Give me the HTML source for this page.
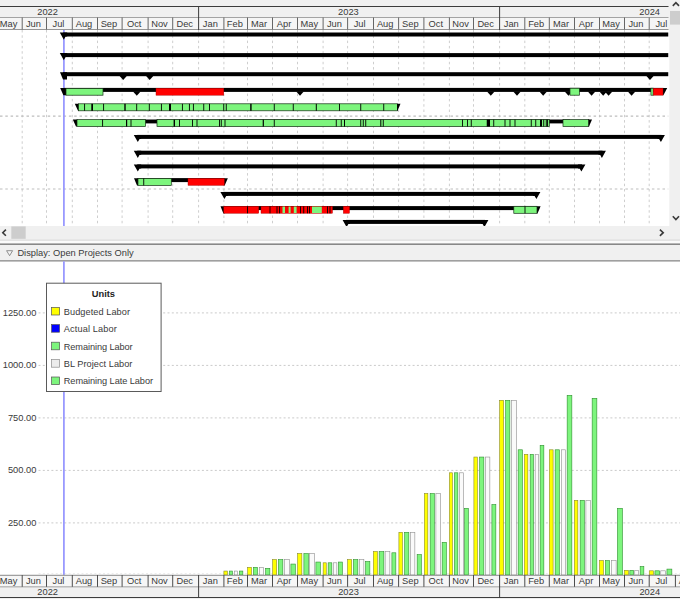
<!DOCTYPE html>
<html lang="en">
<head>
<meta charset="utf-8">
<title>Resource Usage Profile</title>
<style>
html,body{margin:0;padding:0;background:#fff;}
body{width:680px;height:599px;overflow:hidden;font-family:"Liberation Sans",Arial,sans-serif;}
svg{display:block;}
</style>
</head>
<body>
<svg width="680" height="599" viewBox="0 0 680 599" font-family='"Liberation Sans", Arial, sans-serif' font-size="9.3" fill="#3a3a3a">
<rect x="0" y="0" width="680" height="599" fill="#ffffff"/>
<g id="gantt-header">
<rect x="0" y="0" width="680" height="30" fill="#f0f0f0"/>
<rect x="0" y="17.6" width="668.5" height="12" fill="#f5f5f5"/>
<rect x="0" y="6" width="668.5" height="1" fill="#3c3c3c"/>
<rect x="0" y="17" width="668.5" height="0.9" fill="#9a9a9a"/>
<rect x="0" y="29" width="668.5" height="0.9" fill="#8c8c8c"/>
<rect x="21.7" y="17.5" width="1" height="12" fill="#666"/>
<rect x="46" y="17.5" width="1" height="12" fill="#666"/>
<rect x="71.8" y="17.5" width="1" height="12" fill="#666"/>
<rect x="97" y="17.5" width="1" height="12" fill="#666"/>
<rect x="121.6" y="17.5" width="1" height="12" fill="#666"/>
<rect x="147.6" y="17.5" width="1" height="12" fill="#666"/>
<rect x="172.2" y="17.5" width="1" height="12" fill="#666"/>
<rect x="198.1" y="6" width="1" height="24" fill="#3c3c3c"/>
<rect x="223.4" y="17.5" width="1" height="12" fill="#666"/>
<rect x="247" y="17.5" width="1" height="12" fill="#666"/>
<rect x="272" y="17.5" width="1" height="12" fill="#666"/>
<rect x="297" y="17.5" width="1" height="12" fill="#666"/>
<rect x="322.6" y="17.5" width="1" height="12" fill="#666"/>
<rect x="347.1" y="17.5" width="1" height="12" fill="#666"/>
<rect x="373" y="17.5" width="1" height="12" fill="#666"/>
<rect x="398.1" y="17.5" width="1" height="12" fill="#666"/>
<rect x="423.4" y="17.5" width="1" height="12" fill="#666"/>
<rect x="448.9" y="17.5" width="1" height="12" fill="#666"/>
<rect x="473" y="17.5" width="1" height="12" fill="#666"/>
<rect x="499.1" y="6" width="1" height="24" fill="#3c3c3c"/>
<rect x="524.3" y="17.5" width="1" height="12" fill="#666"/>
<rect x="548.8" y="17.5" width="1" height="12" fill="#666"/>
<rect x="574" y="17.5" width="1" height="12" fill="#666"/>
<rect x="599" y="17.5" width="1" height="12" fill="#666"/>
<rect x="624" y="17.5" width="1" height="12" fill="#666"/>
<rect x="648.7" y="17.5" width="1" height="12" fill="#666"/>
</g>
<defs><clipPath id="cg"><rect x="0" y="0" width="668.5" height="226"/></clipPath><clipPath id="ch"><rect x="0" y="261" width="680" height="338"/></clipPath></defs>
<g id="gantt-header-text" clip-path="url(#cg)" text-anchor="middle">
<text x="47.59" y="15.4">2022</text>
<text x="348.4" y="15.4">2023</text>
<text x="649.65" y="15.4">2024</text>
<text x="8.64" y="27">May</text>
<text x="33.45" y="27">Jun</text>
<text x="58.5" y="27">Jul</text>
<text x="84" y="27">Aug</text>
<text x="108.9" y="27">Sep</text>
<text x="134.2" y="27">Oct</text>
<text x="159.5" y="27">Nov</text>
<text x="184.75" y="27">Dec</text>
<text x="210.35" y="27">Jan</text>
<text x="234.8" y="27">Feb</text>
<text x="259.1" y="27">Mar</text>
<text x="284.1" y="27">Apr</text>
<text x="309.4" y="27">May</text>
<text x="334.45" y="27">Jun</text>
<text x="359.65" y="27">Jul</text>
<text x="385.15" y="27">Aug</text>
<text x="410.35" y="27">Sep</text>
<text x="435.75" y="27">Oct</text>
<text x="460.55" y="27">Nov</text>
<text x="485.65" y="27">Dec</text>
<text x="511.3" y="27">Jan</text>
<text x="536.15" y="27">Feb</text>
<text x="561" y="27">Mar</text>
<text x="586.1" y="27">Apr</text>
<text x="611.1" y="27">May</text>
<text x="635.95" y="27">Jun</text>
<text x="661.4" y="27">Jul</text>
</g>
<g id="gantt-body" clip-path="url(#cg)">
<line x1="22.2" y1="30" x2="22.2" y2="226" stroke="#cecece" stroke-width="1" stroke-dasharray="2.5 2.8"/>
<line x1="46.5" y1="30" x2="46.5" y2="226" stroke="#cecece" stroke-width="1" stroke-dasharray="2.5 2.8"/>
<line x1="72.3" y1="30" x2="72.3" y2="226" stroke="#cecece" stroke-width="1" stroke-dasharray="2.5 2.8"/>
<line x1="97.5" y1="30" x2="97.5" y2="226" stroke="#cecece" stroke-width="1" stroke-dasharray="2.5 2.8"/>
<line x1="122.1" y1="30" x2="122.1" y2="226" stroke="#cecece" stroke-width="1" stroke-dasharray="2.5 2.8"/>
<line x1="148.1" y1="30" x2="148.1" y2="226" stroke="#cecece" stroke-width="1" stroke-dasharray="2.5 2.8"/>
<line x1="172.7" y1="30" x2="172.7" y2="226" stroke="#cecece" stroke-width="1" stroke-dasharray="2.5 2.8"/>
<line x1="198.6" y1="30" x2="198.6" y2="226" stroke="#cecece" stroke-width="1" stroke-dasharray="2.5 2.8"/>
<line x1="223.9" y1="30" x2="223.9" y2="226" stroke="#cecece" stroke-width="1" stroke-dasharray="2.5 2.8"/>
<line x1="247.5" y1="30" x2="247.5" y2="226" stroke="#cecece" stroke-width="1" stroke-dasharray="2.5 2.8"/>
<line x1="272.5" y1="30" x2="272.5" y2="226" stroke="#cecece" stroke-width="1" stroke-dasharray="2.5 2.8"/>
<line x1="297.5" y1="30" x2="297.5" y2="226" stroke="#cecece" stroke-width="1" stroke-dasharray="2.5 2.8"/>
<line x1="323.1" y1="30" x2="323.1" y2="226" stroke="#cecece" stroke-width="1" stroke-dasharray="2.5 2.8"/>
<line x1="347.6" y1="30" x2="347.6" y2="226" stroke="#cecece" stroke-width="1" stroke-dasharray="2.5 2.8"/>
<line x1="373.5" y1="30" x2="373.5" y2="226" stroke="#cecece" stroke-width="1" stroke-dasharray="2.5 2.8"/>
<line x1="398.6" y1="30" x2="398.6" y2="226" stroke="#cecece" stroke-width="1" stroke-dasharray="2.5 2.8"/>
<line x1="423.9" y1="30" x2="423.9" y2="226" stroke="#cecece" stroke-width="1" stroke-dasharray="2.5 2.8"/>
<line x1="449.4" y1="30" x2="449.4" y2="226" stroke="#cecece" stroke-width="1" stroke-dasharray="2.5 2.8"/>
<line x1="473.5" y1="30" x2="473.5" y2="226" stroke="#cecece" stroke-width="1" stroke-dasharray="2.5 2.8"/>
<line x1="499.6" y1="30" x2="499.6" y2="226" stroke="#cecece" stroke-width="1" stroke-dasharray="2.5 2.8"/>
<line x1="524.8" y1="30" x2="524.8" y2="226" stroke="#cecece" stroke-width="1" stroke-dasharray="2.5 2.8"/>
<line x1="549.3" y1="30" x2="549.3" y2="226" stroke="#cecece" stroke-width="1" stroke-dasharray="2.5 2.8"/>
<line x1="574.5" y1="30" x2="574.5" y2="226" stroke="#cecece" stroke-width="1" stroke-dasharray="2.5 2.8"/>
<line x1="599.5" y1="30" x2="599.5" y2="226" stroke="#cecece" stroke-width="1" stroke-dasharray="2.5 2.8"/>
<line x1="624.5" y1="30" x2="624.5" y2="226" stroke="#cecece" stroke-width="1" stroke-dasharray="2.5 2.8"/>
<line x1="649.2" y1="30" x2="649.2" y2="226" stroke="#cecece" stroke-width="1" stroke-dasharray="2.5 2.8"/>
<line x1="0" y1="116.1" x2="668.5" y2="116.1" stroke="#bdbdbd" stroke-width="1.1" stroke-dasharray="2.5 2.8"/>
<line x1="0" y1="189.0" x2="668.5" y2="189.0" stroke="#bdbdbd" stroke-width="1.1" stroke-dasharray="2.5 2.8"/>
<rect x="63.05" y="30" width="1.7" height="196" fill="#9494ff"/>
<rect x="63.2" y="32.5" width="605.3" height="4" fill="#000"/>
<polygon points="59.8,32.5 67.2,32.5 67.2,36.5 65.6,36.5 63.8,39.7" fill="#000"/>
<rect x="63.2" y="53.1" width="605.3" height="4" fill="#000"/>
<polygon points="59.8,53.1 67.2,53.1 67.2,57.1 65.6,57.1 63.8,60.3" fill="#000"/>
<rect x="63" y="72.2" width="605.5" height="4" fill="#000"/>
<polygon points="60,72.3 67,72.3 67,79.4 63,79.4" fill="#000"/>
<polygon points="119.4,75.7 127,75.7 123.2,80.1" fill="#000"/>
<polygon points="145.9,75.7 153.5,75.7 149.7,80.1" fill="#000"/>
<polygon points="646.2,75.7 653.8,75.7 650,80.1" fill="#000"/>
<rect x="64" y="87.9" width="599.5" height="4" fill="#000"/>
<polygon points="60.2,88 66.2,88 66.2,95.2 63.4,95.2" fill="#000"/>
<polygon points="663,88 667.2,88 663.4,95.2 663,95.2" fill="#000"/>
<polygon points="133,91.4 140.6,91.4 136.8,95.8" fill="#000"/>
<polygon points="296.2,91.4 303.8,91.4 300,95.8" fill="#000"/>
<polygon points="487,91.4 494.6,91.4 490.8,95.8" fill="#000"/>
<polygon points="513.2,91.4 520.8,91.4 517,95.8" fill="#000"/>
<polygon points="539.4,91.4 547,91.4 543.2,95.8" fill="#000"/>
<polygon points="564.7,91.4 572.3,91.4 568.5,95.8" fill="#000"/>
<polygon points="587.8,91.4 595.4,91.4 591.6,95.8" fill="#000"/>
<polygon points="599.4,91.4 607,91.4 603.2,95.8" fill="#000"/>
<polygon points="604.8,91.4 612.4,91.4 608.6,95.8" fill="#000"/>
<polygon points="627.8,91.4 635.4,91.4 631.6,95.8" fill="#000"/>
<rect x="66" y="88.4" width="37" height="6.8" fill="#7df57d" stroke="#142c14" stroke-width="0.7"/>
<rect x="156" y="88.2" width="67.8" height="7" fill="#ff0000" stroke="#a00000" stroke-width="0.4"/>
<rect x="570" y="88.2" width="9.4" height="7" fill="#7df57d" stroke="#142c14" stroke-width="0.7"/>
<rect x="650.9" y="88.2" width="2.3" height="7" fill="#7df57d" stroke="#142c14" stroke-width="0.7"/>
<rect x="653.2" y="88.2" width="9.8" height="7" fill="#ff0000" stroke="#a00000" stroke-width="0.4"/>
<polygon points="74.8,103.8 79,103.8 79,110.8 78,110.8" fill="#000"/>
<rect x="78.5" y="103.8" width="319" height="7" fill="#7df57d" stroke="#142c14" stroke-width="0.7"/>
<rect x="84.15" y="103.8" width="0.9" height="7" fill="#000"/>
<rect x="91.3" y="103.8" width="1.7" height="7" fill="#000"/>
<rect x="103.15" y="103.8" width="0.9" height="7" fill="#000"/>
<rect x="124.3" y="103.8" width="1.4" height="7" fill="#000"/>
<rect x="136.25" y="103.8" width="0.9" height="7" fill="#000"/>
<rect x="148.85" y="103.8" width="0.9" height="7" fill="#000"/>
<rect x="160.95" y="103.8" width="0.9" height="7" fill="#000"/>
<rect x="169" y="103.8" width="2" height="7" fill="#000"/>
<rect x="181.95" y="103.8" width="0.9" height="7" fill="#000"/>
<rect x="188.95" y="103.8" width="0.9" height="7" fill="#000"/>
<rect x="192.95" y="103.8" width="0.9" height="7" fill="#000"/>
<rect x="203.3" y="103.8" width="0.9" height="7" fill="#000"/>
<rect x="209.05" y="103.8" width="0.9" height="7" fill="#000"/>
<rect x="223.3" y="103.8" width="0.9" height="7" fill="#000"/>
<rect x="225.8" y="103.8" width="0.9" height="7" fill="#000"/>
<rect x="250.2" y="103.8" width="1.4" height="7" fill="#000"/>
<rect x="273.8" y="103.8" width="0.9" height="7" fill="#000"/>
<rect x="292.8" y="103.8" width="0.9" height="7" fill="#000"/>
<rect x="315.8" y="103.8" width="1" height="7" fill="#000"/>
<rect x="339.05" y="103.8" width="0.9" height="7" fill="#000"/>
<rect x="360.3" y="103.8" width="0.9" height="7" fill="#000"/>
<rect x="383.3" y="103.8" width="0.9" height="7" fill="#000"/>
<polygon points="397,103.8 400.5,103.8 397.5,110.8 397,110.8" fill="#000"/>
<polygon points="72.8,119.6 77.2,119.6 77.2,126.6 76,126.6" fill="#000"/>
<rect x="100" y="119.5" width="470" height="3.9" fill="#000"/>
<rect x="77" y="119.6" width="68.5" height="7" fill="#7df57d" stroke="#142c14" stroke-width="0.7"/>
<rect x="102.15" y="119.6" width="0.9" height="7" fill="#000"/>
<rect x="126" y="119.6" width="1.2" height="7" fill="#000"/>
<rect x="130.55" y="119.6" width="0.9" height="7" fill="#000"/>
<rect x="157" y="119.6" width="392.3" height="7" fill="#7df57d" stroke="#142c14" stroke-width="0.7"/>
<rect x="173.6" y="119.6" width="1.4" height="7" fill="#000"/>
<rect x="179.05" y="119.6" width="0.9" height="7" fill="#000"/>
<rect x="192.05" y="119.6" width="0.9" height="7" fill="#000"/>
<rect x="196.55" y="119.6" width="0.9" height="7" fill="#000"/>
<rect x="219.05" y="119.6" width="0.9" height="7" fill="#000"/>
<rect x="220.8" y="119.6" width="0.9" height="7" fill="#000"/>
<rect x="224.55" y="119.6" width="0.9" height="7" fill="#000"/>
<rect x="262.7" y="119.6" width="1.2" height="7" fill="#000"/>
<rect x="273.8" y="119.6" width="0.9" height="7" fill="#000"/>
<rect x="335.8" y="119.6" width="0.9" height="7" fill="#000"/>
<rect x="340.8" y="119.6" width="0.9" height="7" fill="#000"/>
<rect x="344" y="119.6" width="1" height="7" fill="#000"/>
<rect x="360.3" y="119.6" width="0.9" height="7" fill="#000"/>
<rect x="362.8" y="119.6" width="0.9" height="7" fill="#000"/>
<rect x="365.3" y="119.6" width="0.9" height="7" fill="#000"/>
<rect x="380.3" y="119.6" width="1" height="7" fill="#000"/>
<rect x="382.8" y="119.6" width="0.9" height="7" fill="#000"/>
<rect x="462.05" y="119.6" width="0.9" height="7" fill="#000"/>
<rect x="467.05" y="119.6" width="0.9" height="7" fill="#000"/>
<rect x="470.8" y="119.6" width="0.9" height="7" fill="#000"/>
<rect x="486.75" y="119.6" width="3.25" height="7" fill="#000"/>
<rect x="493.3" y="119.6" width="0.9" height="7" fill="#000"/>
<rect x="504.55" y="119.6" width="0.9" height="7" fill="#000"/>
<rect x="509.55" y="119.6" width="0.9" height="7" fill="#000"/>
<rect x="514.55" y="119.6" width="0.9" height="7" fill="#000"/>
<rect x="530.8" y="119.6" width="0.9" height="7" fill="#000"/>
<rect x="535.3" y="119.6" width="0.9" height="7" fill="#000"/>
<rect x="540" y="119.6" width="2" height="7" fill="#000"/>
<rect x="543.3" y="119.6" width="0.9" height="7" fill="#000"/>
<rect x="545.8" y="119.6" width="0.9" height="7" fill="#000"/>
<rect x="547.05" y="119.6" width="0.9" height="7" fill="#000"/>
<rect x="563" y="119.6" width="25.8" height="7" fill="#7df57d" stroke="#142c14" stroke-width="0.7"/>
<polygon points="588.5,119.6 592,119.6 589,126.6 588.5,126.6" fill="#000"/>
<rect x="137.2" y="134.9" width="524.3" height="4" fill="#000"/>
<polygon points="133.8,134.9 141.2,134.9 141.2,138.9 139.6,138.9 137.8,142.1" fill="#000"/>
<polygon points="664.9,134.9 657.5,134.9 657.5,138.9 659.1,138.9 660.9,142.1" fill="#000"/>
<rect x="137.2" y="150.7" width="465.3" height="4" fill="#000"/>
<polygon points="133.8,150.7 141.2,150.7 141.2,154.7 139.6,154.7 137.8,157.9" fill="#000"/>
<polygon points="605.9,150.7 598.5,150.7 598.5,154.7 600.1,154.7 601.9,157.9" fill="#000"/>
<rect x="137.2" y="164.4" width="444.8" height="4" fill="#000"/>
<polygon points="133.8,164.4 141.2,164.4 141.2,168.4 139.6,168.4 137.8,171.6" fill="#000"/>
<polygon points="585.4,164.4 578,164.4 578,168.4 579.6,168.4 581.4,171.6" fill="#000"/>
<rect x="137.5" y="178.1" width="86.9" height="4" fill="#000"/>
<polygon points="134,178.2 138.3,178.2 138.3,185.5 137,185.5" fill="#000"/>
<polygon points="223.8,178.2 227.8,178.2 224.7,185.5 223.8,185.5" fill="#000"/>
<rect x="138" y="178.4" width="33.3" height="7" fill="#7df57d" stroke="#142c14" stroke-width="0.7"/>
<rect x="143.3" y="178.4" width="0.9" height="7" fill="#000"/>
<rect x="188" y="178.4" width="36.3" height="7" fill="#ff0000" stroke="#a00000" stroke-width="0.4"/>
<rect x="223.8" y="191.9" width="313.2" height="4" fill="#000"/>
<polygon points="220.4,191.9 227.8,191.9 227.8,195.9 226.2,195.9 224.4,199.1" fill="#000"/>
<polygon points="540.4,191.9 533,191.9 533,195.9 534.6,195.9 536.4,199.1" fill="#000"/>
<rect x="224" y="206.1" width="313" height="4" fill="#000"/>
<polygon points="220.5,206.2 224.6,206.2 224.6,213.4 223.4,213.4" fill="#000"/>
<polygon points="536.6,206.2 540.6,206.2 537.5,213.4 536.6,213.4" fill="#000"/>
<rect x="223.8" y="206.3" width="35" height="7" fill="#ff0000" stroke="#a00000" stroke-width="0.4"/>
<rect x="247.05" y="206.3" width="0.9" height="7" fill="#000"/>
<rect x="261" y="206.3" width="71.5" height="7" fill="#ff0000" stroke="#a00000" stroke-width="0.4"/>
<rect x="269.55" y="206.3" width="0.9" height="7" fill="#000"/>
<rect x="276.55" y="206.3" width="0.9" height="7" fill="#000"/>
<rect x="279.15" y="206.3" width="0.9" height="7" fill="#000"/>
<rect x="300.05" y="206.3" width="0.9" height="7" fill="#000"/>
<rect x="303.3" y="206.3" width="0.9" height="7" fill="#000"/>
<rect x="307.05" y="206.3" width="0.9" height="7" fill="#000"/>
<rect x="309.15" y="206.3" width="0.9" height="7" fill="#000"/>
<rect x="327.05" y="206.3" width="0.9" height="7" fill="#000"/>
<rect x="329.55" y="206.3" width="0.9" height="7" fill="#000"/>
<rect x="282.5" y="206.6" width="2.5" height="6.4" fill="#7df57d"/>
<rect x="288.6" y="206.6" width="2" height="6.4" fill="#7df57d"/>
<rect x="293.8" y="206.6" width="2.8" height="6.4" fill="#7df57d"/>
<rect x="312" y="206.6" width="9.8" height="6.4" fill="#7df57d"/>
<rect x="343.3" y="206.3" width="6.2" height="7" fill="#ff0000" stroke="#a00000" stroke-width="0.4"/>
<rect x="513.8" y="206.3" width="23.2" height="7" fill="#7df57d" stroke="#142c14" stroke-width="0.7"/>
<rect x="524.55" y="206.3" width="0.9" height="7" fill="#000"/>
<rect x="346" y="219.9" width="139" height="4" fill="#000"/>
<polygon points="342.6,219.9 350,219.9 350,223.9 348.4,223.9 346.6,227.1" fill="#000"/>
<polygon points="488.4,219.9 481,219.9 481,223.9 482.6,223.9 484.4,227.1" fill="#000"/>
</g>
<g id="scrollbars">
<rect x="669.3" y="0" width="10.7" height="240" fill="#f0f0f0"/>
<rect x="0" y="226" width="680" height="13.8" fill="#f0f0f0"/>
<rect x="670" y="11" width="10" height="13.6" fill="#cdcdcd"/>
<rect x="11.3" y="226.4" width="14.4" height="12.4" fill="#cdcdcd"/>
<polyline points="672.8,5.9 675.9,2.7 679,5.9" fill="none" stroke="#3a3a3a" stroke-width="1.6"/>
<polyline points="672.8,216.2 675.9,219.6 679,216.2" fill="none" stroke="#3a3a3a" stroke-width="1.6"/>
<polyline points="5.9,229.6 2.8,232.7 5.9,235.8" fill="none" stroke="#3a3a3a" stroke-width="1.6"/>
<polyline points="659.9,229.6 663.2,232.7 659.9,235.8" fill="none" stroke="#3a3a3a" stroke-width="1.6"/>
</g>
<g id="display-bar">
<rect x="0" y="239.8" width="680" height="0.8" fill="#b8b8b8"/>
<rect x="0" y="240.6" width="680" height="2.8" fill="#fbfbfb"/>
<rect x="0" y="243.4" width="680" height="1.6" fill="#888"/>
<rect x="0" y="245" width="680" height="15.3" fill="#f0f0f0"/>
<rect x="0" y="260.2" width="680" height="1.3" fill="#888"/>
<polygon points="6.6,250.7 12.6,250.7 9.6,255.7" fill="#f4f4f4" stroke="#777" stroke-width="0.8"/>
<text x="17.4" y="256.2">Display: Open Projects Only</text>
</g>
<g id="histogram">
<line x1="38.5" y1="522.9" x2="680" y2="522.9" stroke="#cacaca" stroke-width="1" stroke-dasharray="2 2.3"/>
<text x="36.4" y="525.8" text-anchor="end">250.00</text>
<line x1="38.5" y1="470.4" x2="680" y2="470.4" stroke="#cacaca" stroke-width="1" stroke-dasharray="2 2.3"/>
<text x="36.4" y="473.3" text-anchor="end">500.00</text>
<line x1="38.5" y1="417.9" x2="680" y2="417.9" stroke="#cacaca" stroke-width="1" stroke-dasharray="2 2.3"/>
<text x="36.4" y="420.8" text-anchor="end">750.00</text>
<line x1="38.5" y1="365.4" x2="680" y2="365.4" stroke="#cacaca" stroke-width="1" stroke-dasharray="2 2.3"/>
<text x="36.4" y="368.3" text-anchor="end">1000.00</text>
<line x1="38.5" y1="312.9" x2="680" y2="312.9" stroke="#cacaca" stroke-width="1" stroke-dasharray="2 2.3"/>
<text x="36.4" y="315.8" text-anchor="end">1250.00</text>
<line x1="38.5" y1="573.6" x2="680" y2="573.6" stroke="#ebebeb" stroke-width="1" stroke-dasharray="2 2.3"/>
<rect x="63.05" y="261.3" width="1.7" height="313.6" fill="#9494ff"/>
<rect x="223.9" y="571.05" width="3.45" height="3.95" fill="#ffff00" stroke="#8a8a2a" stroke-width="0.6"/>
<rect x="229.4" y="571.05" width="3.05" height="3.95" fill="#7df57d" stroke="#2f8f2f" stroke-width="0.6"/>
<rect x="234.4" y="571.05" width="3.05" height="3.95" fill="#fafafa" stroke="#8f8f8f" stroke-width="0.6"/>
<rect x="239.4" y="571.05" width="3.45" height="3.95" fill="#7df57d" stroke="#2f8f2f" stroke-width="0.6"/>
<rect x="247.65" y="567.3" width="3.8" height="7.7" fill="#ffff00" stroke="#8a8a2a" stroke-width="0.6"/>
<rect x="253.4" y="567.3" width="4.05" height="7.7" fill="#7df57d" stroke="#2f8f2f" stroke-width="0.6"/>
<rect x="259.4" y="567.3" width="4.05" height="7.7" fill="#fafafa" stroke="#8f8f8f" stroke-width="0.6"/>
<rect x="265.65" y="568.3" width="4.2" height="6.7" fill="#7df57d" stroke="#2f8f2f" stroke-width="0.6"/>
<rect x="272.65" y="559.55" width="4" height="15.45" fill="#ffff00" stroke="#8a8a2a" stroke-width="0.6"/>
<rect x="278.4" y="559.55" width="4.45" height="15.45" fill="#7df57d" stroke="#2f8f2f" stroke-width="0.6"/>
<rect x="284.65" y="559.55" width="4.7" height="15.45" fill="#fafafa" stroke="#8f8f8f" stroke-width="0.6"/>
<rect x="290.9" y="564.05" width="4.45" height="10.95" fill="#7df57d" stroke="#2f8f2f" stroke-width="0.6"/>
<rect x="297.65" y="553.55" width="4.2" height="21.45" fill="#ffff00" stroke="#8a8a2a" stroke-width="0.6"/>
<rect x="303.9" y="553.55" width="4.45" height="21.45" fill="#7df57d" stroke="#2f8f2f" stroke-width="0.6"/>
<rect x="309.65" y="553.55" width="4.7" height="21.45" fill="#fafafa" stroke="#8f8f8f" stroke-width="0.6"/>
<rect x="315.9" y="562.05" width="4.45" height="12.95" fill="#7df57d" stroke="#2f8f2f" stroke-width="0.6"/>
<rect x="323.15" y="562.8" width="3.1" height="12.2" fill="#ffff00" stroke="#8a8a2a" stroke-width="0.6"/>
<rect x="328.15" y="562.8" width="3.7" height="12.2" fill="#7df57d" stroke="#2f8f2f" stroke-width="0.6"/>
<rect x="333.4" y="562.8" width="3.45" height="12.2" fill="#fafafa" stroke="#8f8f8f" stroke-width="0.6"/>
<rect x="338.4" y="562.05" width="3.95" height="12.95" fill="#7df57d" stroke="#2f8f2f" stroke-width="0.6"/>
<rect x="347.65" y="559.55" width="3.95" height="15.45" fill="#ffff00" stroke="#8a8a2a" stroke-width="0.6"/>
<rect x="353.4" y="559.55" width="4.45" height="15.45" fill="#7df57d" stroke="#2f8f2f" stroke-width="0.6"/>
<rect x="359.4" y="559.55" width="4.45" height="15.45" fill="#fafafa" stroke="#8f8f8f" stroke-width="0.6"/>
<rect x="365.65" y="561.55" width="4.2" height="13.45" fill="#7df57d" stroke="#2f8f2f" stroke-width="0.6"/>
<rect x="373.4" y="551.55" width="3.95" height="23.45" fill="#ffff00" stroke="#8a8a2a" stroke-width="0.6"/>
<rect x="379.15" y="551.55" width="4.7" height="23.45" fill="#7df57d" stroke="#2f8f2f" stroke-width="0.6"/>
<rect x="385.15" y="551.55" width="4.7" height="23.45" fill="#fafafa" stroke="#8f8f8f" stroke-width="0.6"/>
<rect x="391.9" y="552.8" width="3.95" height="22.2" fill="#7df57d" stroke="#2f8f2f" stroke-width="0.6"/>
<rect x="398.9" y="532.3" width="3.55" height="42.7" fill="#ffff00" stroke="#8a8a2a" stroke-width="0.6"/>
<rect x="404.65" y="532.3" width="4.2" height="42.7" fill="#7df57d" stroke="#2f8f2f" stroke-width="0.6"/>
<rect x="410.65" y="532.3" width="4.2" height="42.7" fill="#fafafa" stroke="#8f8f8f" stroke-width="0.6"/>
<rect x="417.15" y="554.55" width="4.2" height="20.45" fill="#7df57d" stroke="#2f8f2f" stroke-width="0.6"/>
<rect x="424.4" y="493.55" width="3.45" height="81.45" fill="#ffff00" stroke="#8a8a2a" stroke-width="0.6"/>
<rect x="430.15" y="493.55" width="4.2" height="81.45" fill="#7df57d" stroke="#2f8f2f" stroke-width="0.6"/>
<rect x="435.9" y="493.55" width="4.45" height="81.45" fill="#fafafa" stroke="#8f8f8f" stroke-width="0.6"/>
<rect x="442.15" y="542.3" width="4.2" height="32.7" fill="#7df57d" stroke="#2f8f2f" stroke-width="0.6"/>
<rect x="449.4" y="472.8" width="3.05" height="102.2" fill="#ffff00" stroke="#8a8a2a" stroke-width="0.6"/>
<rect x="454.4" y="472.8" width="3.45" height="102.2" fill="#7df57d" stroke="#2f8f2f" stroke-width="0.6"/>
<rect x="459.65" y="472.8" width="3.7" height="102.2" fill="#fafafa" stroke="#8f8f8f" stroke-width="0.6"/>
<rect x="464.65" y="508.3" width="3.7" height="66.7" fill="#7df57d" stroke="#2f8f2f" stroke-width="0.6"/>
<rect x="473.9" y="457.05" width="3.45" height="117.95" fill="#ffff00" stroke="#8a8a2a" stroke-width="0.6"/>
<rect x="479.65" y="457.05" width="4.2" height="117.95" fill="#7df57d" stroke="#2f8f2f" stroke-width="0.6"/>
<rect x="485.65" y="457.05" width="4.2" height="117.95" fill="#fafafa" stroke="#8f8f8f" stroke-width="0.6"/>
<rect x="491.9" y="504.55" width="3.95" height="70.45" fill="#7df57d" stroke="#2f8f2f" stroke-width="0.6"/>
<rect x="499.65" y="400.3" width="3.95" height="174.7" fill="#ffff00" stroke="#8a8a2a" stroke-width="0.6"/>
<rect x="505.65" y="400.3" width="4.2" height="174.7" fill="#7df57d" stroke="#2f8f2f" stroke-width="0.6"/>
<rect x="511.65" y="400.3" width="4.7" height="174.7" fill="#fafafa" stroke="#8f8f8f" stroke-width="0.6"/>
<rect x="518.15" y="449.8" width="4.3" height="125.2" fill="#7df57d" stroke="#2f8f2f" stroke-width="0.6"/>
<rect x="524.4" y="454.3" width="3.45" height="120.7" fill="#ffff00" stroke="#8a8a2a" stroke-width="0.6"/>
<rect x="530.15" y="454.3" width="3.3" height="120.7" fill="#7df57d" stroke="#2f8f2f" stroke-width="0.6"/>
<rect x="535.15" y="454.3" width="3.5" height="120.7" fill="#fafafa" stroke="#8f8f8f" stroke-width="0.6"/>
<rect x="540.15" y="445.3" width="3.7" height="129.7" fill="#7df57d" stroke="#2f8f2f" stroke-width="0.6"/>
<rect x="549.4" y="449.8" width="3.7" height="125.2" fill="#ffff00" stroke="#8a8a2a" stroke-width="0.6"/>
<rect x="555.15" y="449.8" width="4.2" height="125.2" fill="#7df57d" stroke="#2f8f2f" stroke-width="0.6"/>
<rect x="561.4" y="449.8" width="4.2" height="125.2" fill="#fafafa" stroke="#8f8f8f" stroke-width="0.6"/>
<rect x="567.15" y="395.3" width="4.7" height="179.7" fill="#7df57d" stroke="#2f8f2f" stroke-width="0.6"/>
<rect x="574.4" y="500.3" width="3.45" height="74.7" fill="#ffff00" stroke="#8a8a2a" stroke-width="0.6"/>
<rect x="580.15" y="500.3" width="4.2" height="74.7" fill="#7df57d" stroke="#2f8f2f" stroke-width="0.6"/>
<rect x="585.9" y="500.3" width="4.45" height="74.7" fill="#fafafa" stroke="#8f8f8f" stroke-width="0.6"/>
<rect x="592.15" y="398.3" width="4.7" height="176.7" fill="#7df57d" stroke="#2f8f2f" stroke-width="0.6"/>
<rect x="599.35" y="560.6" width="4.1" height="14.4" fill="#ffff00" stroke="#8a8a2a" stroke-width="0.6"/>
<rect x="605.45" y="560.6" width="4.1" height="14.4" fill="#7df57d" stroke="#2f8f2f" stroke-width="0.6"/>
<rect x="611.35" y="560.6" width="4.8" height="14.4" fill="#fafafa" stroke="#8f8f8f" stroke-width="0.6"/>
<rect x="617.45" y="508.3" width="5" height="66.7" fill="#7df57d" stroke="#2f8f2f" stroke-width="0.6"/>
<rect x="624.55" y="570.3" width="3.8" height="4.7" fill="#ffff00" stroke="#8a8a2a" stroke-width="0.6"/>
<rect x="629.85" y="570.3" width="3.7" height="4.7" fill="#7df57d" stroke="#2f8f2f" stroke-width="0.6"/>
<rect x="634.75" y="570.3" width="3.9" height="4.7" fill="#fafafa" stroke="#8f8f8f" stroke-width="0.6"/>
<rect x="640.15" y="566.5" width="3.7" height="8.5" fill="#7df57d" stroke="#2f8f2f" stroke-width="0.6"/>
<rect x="649.25" y="570.8" width="4.1" height="4.2" fill="#ffff00" stroke="#8a8a2a" stroke-width="0.6"/>
<rect x="654.95" y="570.8" width="4.7" height="4.2" fill="#7df57d" stroke="#2f8f2f" stroke-width="0.6"/>
<rect x="660.75" y="570.8" width="4.8" height="4.2" fill="#fafafa" stroke="#8f8f8f" stroke-width="0.6"/>
<rect x="666.95" y="569.1" width="4.9" height="5.9" fill="#7df57d" stroke="#2f8f2f" stroke-width="0.6"/>
<rect x="46.5" y="283.2" width="114.6" height="108.3" fill="#fff" stroke="#5a5a5a" stroke-width="1"/>
<text x="103.4" y="297" text-anchor="middle" font-weight="bold" fill="#222">Units</text>
<rect x="51.6" y="307.4" width="8" height="7.6" fill="#ffff00" stroke="#555" stroke-width="0.7"/>
<text x="63.8" y="315" font-size="9.2" textLength="66.2" lengthAdjust="spacing">Budgeted Labor</text>
<rect x="51.6" y="324.6" width="8" height="7.6" fill="#0000ff" stroke="#555" stroke-width="0.7"/>
<text x="63.8" y="332" font-size="9.2" textLength="53" lengthAdjust="spacing">Actual Labor</text>
<rect x="51.6" y="342.2" width="8" height="7.6" fill="#7df57d" stroke="#555" stroke-width="0.7"/>
<text x="63.8" y="350" font-size="9.2" textLength="68.8" lengthAdjust="spacing">Remaining Labor</text>
<rect x="51.6" y="359.6" width="8" height="7.6" fill="#ececec" stroke="#8c8c8c" stroke-width="0.7"/>
<text x="63.8" y="367" font-size="9.2" textLength="68.6" lengthAdjust="spacing">BL Project Labor</text>
<rect x="51.6" y="377" width="8" height="7.6" fill="#7df57d" stroke="#555" stroke-width="0.7"/>
<text x="63.8" y="384" font-size="9.2" textLength="89.2" lengthAdjust="spacing">Remaining Late Labor</text>
<rect x="0" y="575" width="680" height="24" fill="#f0f0f0"/>
<rect x="0" y="575.4" width="680" height="11.2" fill="#f6f6f6"/>
<rect x="0" y="574.8" width="680" height="0.9" fill="#7c7c7c"/>
<rect x="0" y="586.4" width="680" height="0.9" fill="#9a9a9a"/>
<rect x="0" y="597" width="680" height="1.1" fill="#3c3c3c"/>
<rect x="0" y="598.1" width="680" height="1" fill="#f0f0f0"/>
<rect x="21.7" y="575" width="1" height="11.8" fill="#4c4c4c"/>
<rect x="46" y="575" width="1" height="11.8" fill="#4c4c4c"/>
<rect x="71.8" y="575" width="1" height="11.8" fill="#4c4c4c"/>
<rect x="97" y="575" width="1" height="11.8" fill="#4c4c4c"/>
<rect x="121.6" y="575" width="1" height="11.8" fill="#4c4c4c"/>
<rect x="147.6" y="575" width="1" height="11.8" fill="#4c4c4c"/>
<rect x="172.2" y="575" width="1" height="11.8" fill="#4c4c4c"/>
<rect x="198.1" y="575" width="1" height="22.6" fill="#3c3c3c"/>
<rect x="223.4" y="575" width="1" height="11.8" fill="#4c4c4c"/>
<rect x="247" y="575" width="1" height="11.8" fill="#4c4c4c"/>
<rect x="272" y="575" width="1" height="11.8" fill="#4c4c4c"/>
<rect x="297" y="575" width="1" height="11.8" fill="#4c4c4c"/>
<rect x="322.6" y="575" width="1" height="11.8" fill="#4c4c4c"/>
<rect x="347.1" y="575" width="1" height="11.8" fill="#4c4c4c"/>
<rect x="373" y="575" width="1" height="11.8" fill="#4c4c4c"/>
<rect x="398.1" y="575" width="1" height="11.8" fill="#4c4c4c"/>
<rect x="423.4" y="575" width="1" height="11.8" fill="#4c4c4c"/>
<rect x="448.9" y="575" width="1" height="11.8" fill="#4c4c4c"/>
<rect x="473" y="575" width="1" height="11.8" fill="#4c4c4c"/>
<rect x="499.1" y="575" width="1" height="22.6" fill="#3c3c3c"/>
<rect x="524.3" y="575" width="1" height="11.8" fill="#4c4c4c"/>
<rect x="548.8" y="575" width="1" height="11.8" fill="#4c4c4c"/>
<rect x="574" y="575" width="1" height="11.8" fill="#4c4c4c"/>
<rect x="599" y="575" width="1" height="11.8" fill="#4c4c4c"/>
<rect x="624" y="575" width="1" height="11.8" fill="#4c4c4c"/>
<rect x="648.7" y="575" width="1" height="11.8" fill="#4c4c4c"/>
<rect x="674.9" y="575" width="1" height="11.8" fill="#4c4c4c"/>
<g text-anchor="middle" clip-path="url(#ch)">
<text x="47.7" y="595.4">2022</text>
<text x="348.5" y="595.4">2023</text>
<text x="649.75" y="595.4">2024</text>
<text x="8.64" y="584">May</text>
<text x="33.45" y="584">Jun</text>
<text x="58.5" y="584">Jul</text>
<text x="84" y="584">Aug</text>
<text x="108.9" y="584">Sep</text>
<text x="134.2" y="584">Oct</text>
<text x="159.5" y="584">Nov</text>
<text x="184.75" y="584">Dec</text>
<text x="210.35" y="584">Jan</text>
<text x="234.8" y="584">Feb</text>
<text x="259.1" y="584">Mar</text>
<text x="284.1" y="584">Apr</text>
<text x="309.4" y="584">May</text>
<text x="334.45" y="584">Jun</text>
<text x="359.65" y="584">Jul</text>
<text x="385.15" y="584">Aug</text>
<text x="410.35" y="584">Sep</text>
<text x="435.75" y="584">Oct</text>
<text x="460.55" y="584">Nov</text>
<text x="485.65" y="584">Dec</text>
<text x="511.3" y="584">Jan</text>
<text x="536.15" y="584">Feb</text>
<text x="561" y="584">Mar</text>
<text x="586.1" y="584">Apr</text>
<text x="611.1" y="584">May</text>
<text x="635.95" y="584">Jun</text>
<text x="661.4" y="584">Jul</text>
<text x="687.08" y="584">Aug</text>
</g>
</g>
</svg>
</body>
</html>
